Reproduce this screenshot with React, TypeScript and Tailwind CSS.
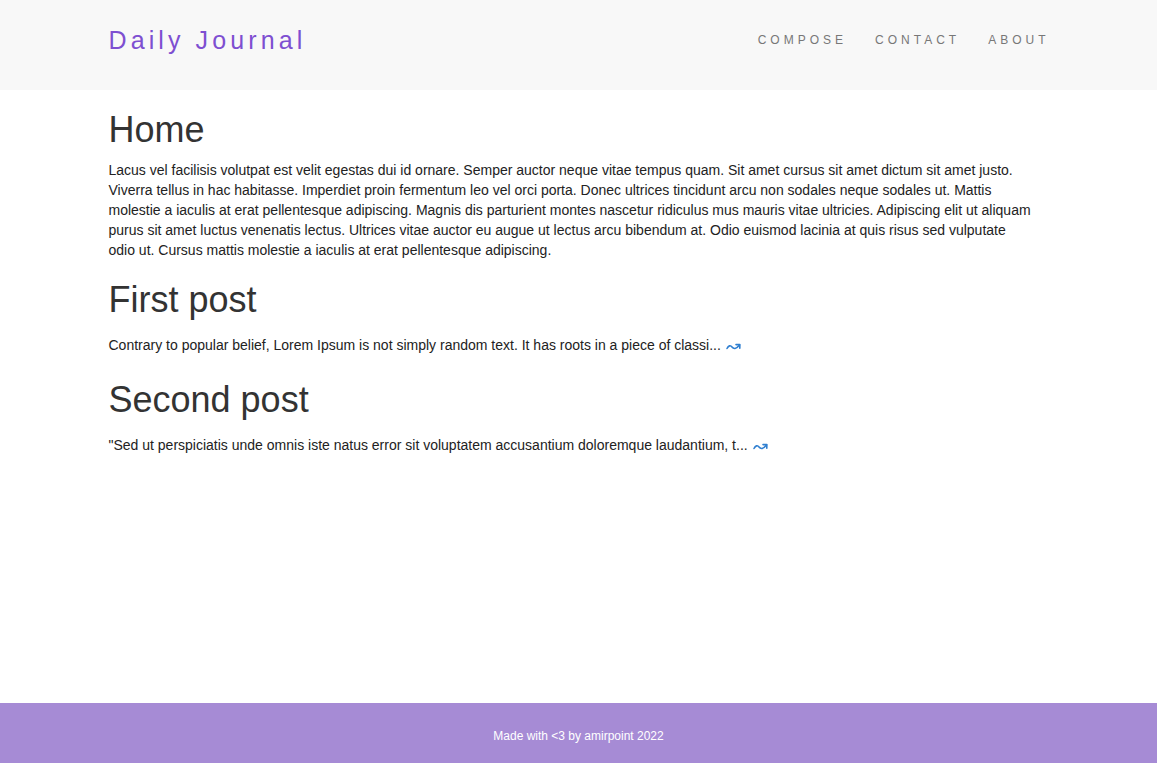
import React from "react";

const font = { fontFamily: '"Liberation Sans", Arial, Helvetica, sans-serif' };

function Arrow() {
  return (
    <a href="#" className="inline-block ml-[5px] align-[-1px] text-[#2f7fd0]">
      <svg width="15" height="10" viewBox="0 0 15 10" fill="none" stroke="currentColor" strokeWidth="1.6" strokeLinecap="round" strokeLinejoin="round">
        <path d="M1 7.5 C2.5 4.5 4.5 4 6 6 C7.5 8 10 8.5 13.5 4" />
        <path d="M10 3.6 L13.8 3.6 L13.8 7.2" />
      </svg>
    </a>
  );
}

export default function App() {
  return (
    <div className="min-h-screen flex flex-col bg-white" style={font}>
      <header className="h-[90px] bg-[#f8f8f8] shrink-0">
        <div className="w-[940px] mx-auto flex justify-between items-start">
          <a href="#" className="mt-[24px] text-[25px] leading-[32px] tracking-[4.1px] text-[#7e4fd1]">
            Daily Journal
          </a>
          <nav className="flex gap-[28px] mt-[32px] -mr-[1px]">
            {["COMPOSE", "CONTACT", "ABOUT"].map((l) => (
              <a key={l} href="#" className="text-[12px] leading-[16px] tracking-[4px] text-[#777]">
                {l}
              </a>
            ))}
          </nav>
        </div>
      </header>
      <main className="flex-1 w-[940px] mx-auto">
        <h1 className="mt-[20px] text-[36px] leading-[39.6px] text-[#333]">Home</h1>
        <p className="mt-[10px] w-[925px] text-[14px] leading-[20px] text-[#222]">
          Lacus vel facilisis volutpat est velit egestas dui id ornare. Semper auctor neque vitae tempus quam. Sit amet cursus sit amet dictum sit amet justo. Viverra tellus in hac habitasse. Imperdiet proin fermentum leo vel orci porta. Donec ultrices tincidunt arcu non sodales neque sodales ut. Mattis molestie a iaculis at erat pellentesque adipiscing. Magnis dis parturient montes nascetur ridiculus mus mauris vitae ultricies. Adipiscing elit ut aliquam purus sit amet luctus venenatis lectus. Ultrices vitae auctor eu augue ut lectus arcu bibendum at. Odio euismod lacinia at quis risus sed vulputate odio ut. Cursus mattis molestie a iaculis at erat pellentesque adipiscing.
        </p>
        <h1 className="mt-[20px] text-[36px] leading-[39.6px] text-[#333]">First post</h1>
        <p className="mt-[15.5px] text-[14px] leading-[20px] text-[#222]">
          Contrary to popular belief, Lorem Ipsum is not simply random text. It has roots in a piece of classi...
          <Arrow />
        </p>
        <h1 className="mt-[25px] text-[36px] leading-[39.6px] text-[#333]">Second post</h1>
        <p className="mt-[15.5px] text-[14px] leading-[20px] text-[#222]">
          "Sed ut perspiciatis unde omnis iste natus error sit voluptatem accusantium doloremque laudantium, t...
          <Arrow />
        </p>
      </main>
      <footer className="h-[60px] shrink-0 bg-[#a68bd5] flex items-center justify-center">
        <p className="mt-[6px] text-[12px] leading-[16px] text-white">Made with &lt;3 by amirpoint 2022</p>
      </footer>
    </div>
  );
}
